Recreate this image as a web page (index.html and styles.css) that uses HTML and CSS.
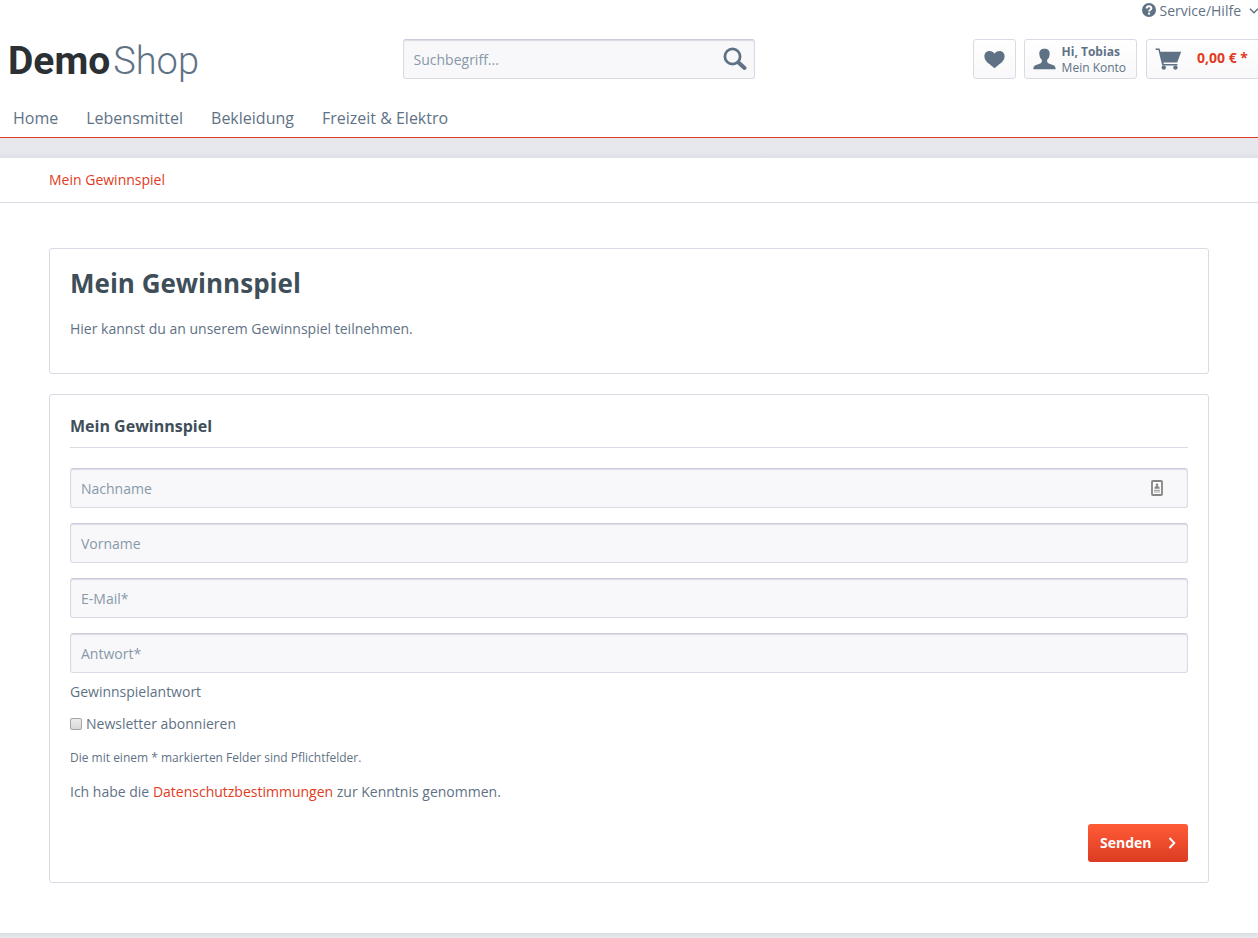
FILE: index.html
```html
<!DOCTYPE html>
<html lang="de">
<head>
<meta charset="utf-8">
<meta name="viewport" content="width=device-width, initial-scale=1">
<title>Mein Gewinnspiel | Demo Shop</title>
<link rel="stylesheet" href="styles.css">
</head>
<body>
<header class="header">
  <div class="topbar">
    <button class="service" type="button">
      <svg class="service-icon" viewBox="0 0 14 14" aria-hidden="true"><circle cx="7" cy="7" r="7" fill="currentColor"/><path d="M4.7 5.4C4.7 2.5 9.4 2.6 9.4 5.2C9.4 6.8 7.1 6.7 7.1 8.6" fill="none" stroke="#fff" stroke-width="2"/><rect x="6.1" y="9.6" width="2" height="2" fill="#fff"/></svg>
      <span>Service/Hilfe</span>
      <svg class="service-arrow" viewBox="0 0 10 6" aria-hidden="true"><path d="M1 0.8L5 4.8L9 0.8" fill="none" stroke="currentColor" stroke-width="1.5"/></svg>
    </button>
  </div>
  <div class="header-main">
    <a class="logo" href="#"><span class="logo-strong">Demo</span><span class="logo-light">Shop</span></a>
    <form class="search" role="search">
      <input class="field search-field" type="search" placeholder="Suchbegriff..." aria-label="Suchbegriff">
      <button class="search-button" type="button" aria-label="Suchen">
        <svg viewBox="0 0 24 24" aria-hidden="true"><circle cx="9.5" cy="9.5" r="7.6" fill="none" stroke="currentColor" stroke-width="2.8"/><path d="M15.5 15.5L21.5 21" stroke="currentColor" stroke-width="4" stroke-linecap="round"/></svg>
      </button>
    </form>
    <div class="actions">
      <a class="action action-wish" href="#" aria-label="Merkzettel">
        <svg viewBox="0 0 22 19" aria-hidden="true"><path d="M11 18.5C10.2 18.5 8.6 16.6 6 14.6C2.8 12.1 0.4 9.6 0.4 6C0.4 2.8 2.7 0.5 5.7 0.5C8 0.5 10 1.6 11 3.4C12 1.6 14 0.5 16.3 0.5C19.3 0.5 21.6 2.8 21.6 6C21.6 9.6 19.2 12.1 16 14.6C13.4 16.6 11.8 18.5 11 18.5Z" fill="currentColor"/></svg>
      </a>
      <a class="action action-account" href="#">
        <svg viewBox="0 0 24 22" aria-hidden="true"><path d="M12 0.3C15.8 0.3 17.6 2.4 17.4 5.9C17.3 8.5 16.3 10.7 14.8 11.9C14.5 13.7 14.8 14.8 16.4 15.6L21.4 17.6C23 18.3 23.6 19.6 23.6 21.6H0.4C0.4 19.6 1 18.3 2.6 17.6L7.6 15.6C9.2 14.8 9.5 13.7 9.2 11.9C7.7 10.7 6.7 8.5 6.6 5.9C6.4 2.4 8.2 0.3 12 0.3Z" fill="currentColor"/></svg>
        <span class="account-text"><strong>Hi, Tobias</strong><span>Mein Konto</span></span>
      </a>
      <a class="action action-cart" href="#">
        <svg viewBox="0 0 27 22" aria-hidden="true"><path d="M0.4 0.5H4.6L5.4 3.8H26.2L22.2 14.4H8.4L8.8 16H22.4V17.4H7.2L3.4 2.1H0.9Z" fill="currentColor"/><circle cx="8.8" cy="19.6" r="2.2" fill="currentColor"/><circle cx="20.4" cy="19.6" r="2.2" fill="currentColor"/></svg>
        <span class="amount">0,00&nbsp;€ *</span>
      </a>
    </div>
  </div>
  <nav class="nav">
    <a href="#">Home</a>
    <a href="#">Lebensmittel</a>
    <a href="#">Bekleidung</a>
    <a href="#">Freizeit &amp; Elektro</a>
  </nav>
</header>
<div class="band band-top"></div>
<nav class="breadcrumb"><a class="link" href="#">Mein Gewinnspiel</a></nav>
<main class="content">
  <section class="panel intro">
    <h1>Mein Gewinnspiel</h1>
    <p>Hier kannst du an unserem Gewinnspiel teilnehmen.</p>
  </section>
  <form class="panel entry">
    <h2>Mein Gewinnspiel</h2>
    <div class="fields">
      <div class="autofill">
        <input class="field" type="text" placeholder="Nachname" aria-label="Nachname">
        <svg class="autofill-icon" viewBox="0 0 12 16" aria-hidden="true"><rect x="1" y="1" width="10" height="14" rx="0.8" fill="#fdfdfd" stroke="#858585" stroke-width="1.8"/><circle cx="6" cy="4.8" r="1.3" fill="#858585"/><path d="M3.4 8.8V7.4L5 6H7L8.6 7.4V8.8Z" fill="#858585"/><path d="M3 10.4H9M3 12H9" stroke="#aaa" stroke-width="1.2"/></svg>
      </div>
      <input class="field" type="text" placeholder="Vorname" aria-label="Vorname">
      <input class="field" type="email" placeholder="E-Mail*" aria-label="E-Mail">
      <input class="field" type="text" placeholder="Antwort*" aria-label="Antwort" aria-describedby="answer-hint">
    </div>
    <p class="hint" id="answer-hint">Gewinnspielantwort</p>
    <div class="check"><input type="checkbox" id="newsletter"><label for="newsletter">Newsletter abonnieren</label></div>
    <p class="required">Die mit einem * markierten Felder sind Pflichtfelder.</p>
    <p class="privacy">Ich habe die <a class="link" href="#">Datenschutzbestimmungen</a> zur Kenntnis genommen.</p>
    <div class="submit-row">
      <button class="submit" type="button"><span>Senden</span><svg viewBox="0 0 8 12" aria-hidden="true"><path d="M1.5 1L6.3 6L1.5 11" fill="none" stroke="currentColor" stroke-width="1.9"/></svg></button>
    </div>
  </form>
</main>
<footer class="band band-bottom"></footer>
</body>
</html>
```
FILE: styles.css
```css
:root {
  --text: #5f7285;
  --heading: #3f4f5a;
  --accent: #e03c22;
  --line: #dadae5;
}

* { box-sizing: border-box; }

body {
  margin: 0;
  min-height: 100vh;
  display: flex;
  flex-direction: column;
  overflow-x: hidden;
  background: #fff;
  color: var(--text);
  font: 14px/24px "Open Sans", "Noto Sans", sans-serif;
}

a { color: inherit; text-decoration: none; }
svg { display: block; flex: none; }
h1, h2, p { margin: 0; }
h1, h2 { color: var(--heading); font-weight: 700; }
button { font: inherit; color: inherit; cursor: pointer; }
.link { color: var(--accent); }

.header { border-bottom: 1px solid var(--accent); overflow: hidden; }

.topbar { display: flex; justify-content: flex-end; height: 22px; }
.service {
  display: flex;
  align-items: center;
  gap: 4px;
  margin-right: -1px;
  padding: 0;
  border: 0;
  background: none;
  line-height: 22px;
  white-space: nowrap;
}
.service-icon { width: 14px; height: 14px; margin-bottom: 2px; }
.service-arrow { width: 10px; height: 6px; margin-left: 4px; }

.header-main {
  display: grid;
  grid-template-columns: 32% 28% 1fr;
  align-items: start;
  padding-top: 17px;
}
.logo {
  display: flex;
  gap: 3px;
  padding-left: 8px;
  font: 38px/44px Roboto, "Open Sans", sans-serif;
}
.logo-strong { color: #2b3035; font-size: 39px; font-weight: 700; }
.logo-light { font-weight: 300; }

.field {
  display: block;
  width: 100%;
  height: 40px;
  padding: 0 10px;
  border: 1px solid var(--line);
  border-top-color: #cbcbdb;
  border-radius: 3px;
  background: #f8f8fa;
  box-shadow: inset 0 1px 1px #dadae5;
  color: var(--text);
  font: inherit;
  appearance: none;
}
.field::placeholder { color: #8798a9; opacity: 1; }

.search { position: relative; }
.search-field { padding-right: 44px; }
.search-button {
  position: absolute;
  top: 0;
  right: 0;
  display: flex;
  align-items: center;
  justify-content: center;
  width: 40px;
  height: 40px;
  padding: 0;
  border: 0;
  background: none;
}
.search-button svg { width: 24px; height: 24px; }

.actions { display: flex; justify-content: flex-end; margin-right: -4px; }
.action {
  display: flex;
  align-items: center;
  height: 40px;
  border: 1px solid var(--line);
  border-radius: 3px;
  background: linear-gradient(#fff, #f8f8fa);
  white-space: nowrap;
}
.action-wish { padding: 0 10px; margin-right: 8px; }
.action-wish svg { width: 21px; height: 19px; }
.action-account { gap: 6px; padding: 0 10px 0 8px; margin-right: 9px; }
.action-account svg { width: 23px; height: 22px; }
.account-text { display: flex; flex-direction: column; padding-top: 2px; font-size: 12px; line-height: 16px; }
.action-cart { gap: 15px; padding: 0 13px 0 8px; }
.action-cart svg { width: 27px; height: 22px; }
.amount { padding-bottom: 2px; color: var(--accent); font-weight: 700; }

.nav {
  display: flex;
  gap: 28px;
  padding: 23px 13px 7px;
  font-size: 16px;
}

.band { background: #e7e8ed; }
.band-top { height: 20px; background: linear-gradient(#e7e8ed 14px, #dfe0e8); }
.band-bottom { flex: 1; min-height: 5px; background: linear-gradient(#dcdee6, #e7e8ed 5px); }

.breadcrumb {
  height: 45px;
  padding: 0 49px;
  border-bottom: 1px solid var(--line);
  line-height: 44px;
}

.content {
  display: flex;
  flex-direction: column;
  gap: 20px;
  width: 100%;
  max-width: 1258px;
  margin: 0 auto;
  padding: 45px 49px 50px;
}
.panel { border: 1px solid var(--line); border-radius: 3px; padding: 20px; }
.intro { padding-top: 18px; padding-bottom: 32px; }
.intro h1 { margin-bottom: 18px; font-size: 26px; line-height: 32px; }
.entry h2 {
  margin-bottom: 20px;
  padding-bottom: 9px;
  border-bottom: 1px solid var(--line);
  font-size: 16px;
  line-height: 23px;
}
.fields { display: grid; gap: 15px; }
.autofill { position: relative; }
.autofill-icon { position: absolute; top: 12px; right: 25px; width: 12px; height: 16px; }
.hint { margin: 7px 0 8px; }
.check { display: flex; align-items: center; gap: 4px; margin-bottom: 10px; }
.check input {
  width: 12px;
  height: 12px;
  margin: 0;
  appearance: none;
  border: 1px solid #a4a4a4;
  border-radius: 2px;
  background: linear-gradient(#ececec, #d8d8d8);
}
.check input:checked { background: var(--text); }
.required { margin-bottom: 10px; font-size: 12px; }
.submit-row { display: flex; justify-content: flex-end; margin-top: 20px; }
.submit {
  display: flex;
  align-items: center;
  justify-content: space-between;
  width: 100px;
  height: 38px;
  padding: 0 12px;
  border: 0;
  border-radius: 3px;
  background: linear-gradient(#ff5b37, #db3c22);
  color: #fff;
  font-weight: 700;
}
.submit svg { width: 8px; height: 12px; }
```
